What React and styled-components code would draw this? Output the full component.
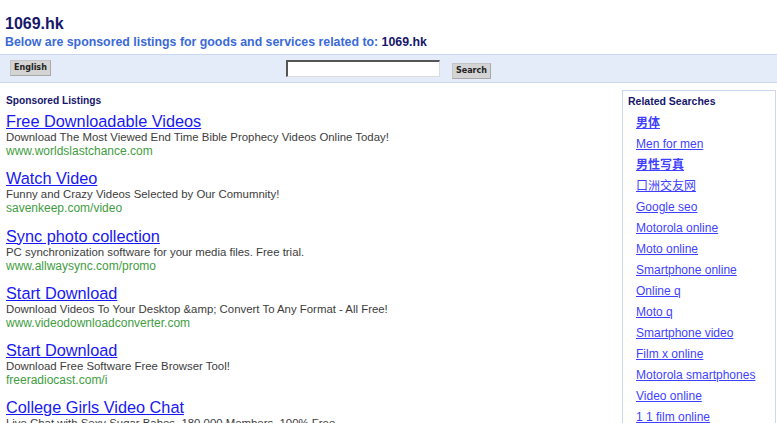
import React from 'react';
import styled, { createGlobalStyle } from 'styled-components';

const GlobalStyle = createGlobalStyle`
  body {
    margin: 0;
    background: #ffffff;
    font-family: 'Liberation Sans', Arial, sans-serif;
  }
`;

const listings = [
  {
    title: 'Free Downloadable Videos',
    desc: 'Download The Most Viewed End Time Bible Prophecy Videos Online Today!',
    url: 'www.worldslastchance.com'
  },
  {
    title: 'Watch Video',
    desc: 'Funny and Crazy Videos Selected by Our Comumnity!',
    url: 'savenkeep.com/video'
  },
  {
    title: 'Sync photo collection',
    desc: 'PC synchronization software for your media files. Free trial.',
    url: 'www.allwaysync.com/promo'
  },
  {
    title: 'Start Download',
    desc: 'Download Videos To Your Desktop &amp; Convert To Any Format - All Free!',
    url: 'www.videodownloadconverter.com'
  },
  {
    title: 'Start Download',
    desc: 'Download Free Software Free Browser Tool!',
    url: 'freeradiocast.com/i'
  },
  {
    title: 'College Girls Video Chat',
    desc: 'Live Chat with Sexy Sugar Babes. 180,000 Members. 100% Free.',
    url: 'www.collegegirlschat.com'
  }
];

const related = [
  { label: '男体', cjk: true, bold: true },
  { label: 'Men for men' },
  { label: '男性写真', cjk: true, bold: true },
  { label: '口洲交友网', cjk: true },
  { label: 'Google seo' },
  { label: 'Motorola online' },
  { label: 'Moto online' },
  { label: 'Smartphone online' },
  { label: 'Online q' },
  { label: 'Moto q' },
  { label: 'Smartphone video' },
  { label: 'Film x online' },
  { label: 'Motorola smartphones' },
  { label: 'Video online' },
  { label: '1 1 film online' }
];

const Page = styled.div`
  width: 777px;
  height: 423px;
  overflow: hidden;
`;

const Header = styled.div`
  padding: 14px 5px 4px;
`;

const SiteName = styled.h1`
  margin: 0;
  font-size: 16px;
  line-height: 19px;
  font-weight: bold;
  color: #16166a;
`;

const Tagline = styled.p`
  margin: 2px 0 0;
  font-size: 12.35px;
  line-height: 15px;
  font-weight: bold;
  color: #3a6ad6;

  strong {
    color: #16166a;
  }
`;

const Toolbar = styled.div`
  display: grid;
  grid-template-columns: 1fr auto 1fr;
  align-items: start;
  height: 27px;
  padding: 0 10px;
  background: #e5ecf9;
  border-top: 1px solid #c9d7f1;
  border-bottom: 1px solid #c9d7f1;
`;

const GreyButton = styled.button`
  margin-top: ${(props) => props.offset}px;
  height: 16px;
  padding: 0 3px;
  background: #d4d4d4;
  border: 1px solid #c4c4c4;
  border-right-color: #a8a8a8;
  border-bottom-color: #a8a8a8;
  font-family: 'DejaVu Sans', Verdana, sans-serif;
  font-size: 8px;
  font-weight: bold;
  color: #222222;
  line-height: 14px;
  justify-self: start;
`;

const SearchGroup = styled.div`
  display: flex;
  align-items: flex-start;
  gap: 12px;
`;

const SearchInput = styled.input`
  box-sizing: border-box;
  margin-top: 5px;
  width: 154px;
  height: 17px;
  padding: 0;
  border: 1px solid #dcdcdc;
  border-top: 2px solid #555555;
  border-left: 2px solid #555555;
  background: #ffffff;
`;

const Main = styled.div`
  display: flex;
  align-items: flex-start;
  padding: 7px 1px 0 6px;
`;

const Listings = styled.div`
  flex: 1;
  padding-top: 4px;
`;

const SectionLabel = styled.div`
  font-size: ${(props) => props.size}px;
  line-height: 14px;
  font-weight: bold;
  color: #16166a;
`;

const Listing = styled.div`
  margin-top: ${(props) => (props.first ? 4 : 11.3)}px;
`;

const ListingTitle = styled.a`
  display: block;
  font-size: 16.3px;
  line-height: 18px;
  color: #1818f2;
  text-decoration: underline;
  text-underline-offset: 1px;
`;

const ListingDesc = styled.div`
  font-size: 11.4px;
  line-height: 14px;
  color: #3c3c3c;
`;

const ListingUrl = styled.div`
  font-size: 12px;
  line-height: 14px;
  color: #3f9d3f;
`;

const Sidebar = styled.div`
  width: 154px;
  height: 340px;
  padding: 3px 0 0 5px;
  border: 1px solid #c9d7f1;
  border-bottom: none;
  box-sizing: border-box;
`;

const RelatedList = styled.ul`
  list-style: none;
  margin: 3px 0 0;
  padding: 0 0 0 8px;
`;

const RelatedItem = styled.li`
  height: 21px;
  line-height: 21px;
`;

const RelatedLink = styled.a`
  font-family: ${(props) =>
    props.cjk
      ? "'Noto Sans CJK SC', 'Liberation Sans', sans-serif"
      : "'Liberation Sans', Arial, sans-serif"};
  font-size: 12px;
  font-weight: ${(props) => (props.bold ? 'bold' : 'normal')};
  color: #3f3fff;
  text-decoration: underline;
`;

const App = () => (
  <Page>
    <GlobalStyle />
    <Header>
      <SiteName>1069.hk</SiteName>
      <Tagline>
        Below are sponsored listings for goods and services related to: <strong>1069.hk</strong>
      </Tagline>
    </Header>
    <Toolbar>
      <GreyButton offset={5}>English</GreyButton>
      <SearchGroup>
        <SearchInput type="text" />
        <GreyButton offset={8}>Search</GreyButton>
      </SearchGroup>
      <span />
    </Toolbar>
    <Main>
      <Listings>
        <SectionLabel size={10.2}>Sponsored Listings</SectionLabel>
        {listings.map((item, i) => (
          <Listing key={i} first={i === 0}>
            <ListingTitle href="#">{item.title}</ListingTitle>
            <ListingDesc>{item.desc}</ListingDesc>
            <ListingUrl>{item.url}</ListingUrl>
          </Listing>
        ))}
      </Listings>
      <Sidebar>
        <SectionLabel size={10.5}>Related Searches</SectionLabel>
        <RelatedList>
          {related.map((r) => (
            <RelatedItem key={r.label}>
              <RelatedLink href="#" cjk={r.cjk} bold={r.bold}>
                {r.label}
              </RelatedLink>
            </RelatedItem>
          ))}
        </RelatedList>
      </Sidebar>
    </Main>
  </Page>
);

export default App;
